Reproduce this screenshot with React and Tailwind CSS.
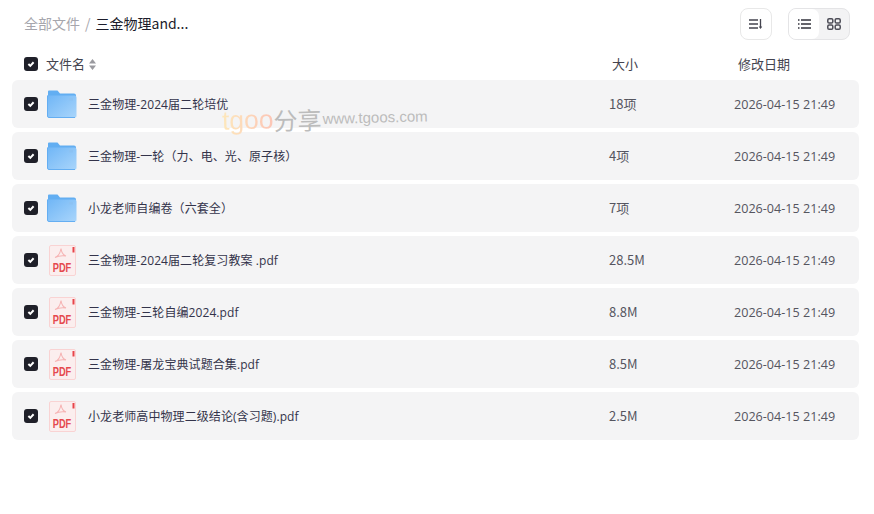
import React from "react";

const files = [
  { name: "三金物理-2024届二轮培优", size: "18项", type: "folder" },
  { name: "三金物理-一轮（力、电、光、原子核）", size: "4项", type: "folder" },
  { name: "小龙老师自编卷（六套全）", size: "7项", type: "folder" },
  { name: "三金物理-2024届二轮复习教案 .pdf", size: "28.5M", type: "pdf" },
  { name: "三金物理-三轮自编2024.pdf", size: "8.8M", type: "pdf" },
  { name: "三金物理-屠龙宝典试题合集.pdf", size: "8.5M", type: "pdf" },
  { name: "小龙老师高中物理二级结论(含习题).pdf", size: "2.5M", type: "pdf" },
];

const Check = () => (
  <span className="flex h-[14px] w-[14px] shrink-0 items-center justify-center rounded-[3px] bg-[#1f2029]">
    <svg width="10" height="10" viewBox="0 0 10 10" fill="none">
      <path d="M2.400 5 4.300 6.900 7.600 3.300" stroke="#fff" strokeWidth="2" />
    </svg>
  </span>
);

const FolderIcon = () => (
  <svg width="30" height="28" viewBox="0 0 30 28" className="shrink-0">
    <defs>
      <linearGradient id="folderFill" x1="0" y1="0" x2="1" y2="1">
        <stop offset="0" stopColor="#70b6f6" />
        <stop offset="1" stopColor="#a9d5fb" />
      </linearGradient>
    </defs>
    <path d="M1 1.500a1 1 0 0 1 1-1h8.500l2.500 3h14a2 2 0 0 1 2 2V7H1z" fill="#62aef2" />
    <path d="M.5 5.500h27a2 2 0 0 1 2 2V26a1.500 1.500 0 0 1-1.500 1.500H2A1.500 1.500 0 0 1 .5 26z" fill="url(#folderFill)" />
    <path d="M.5 5.500V26A1.500 1.500 0 0 0 2 27.500h26" fill="none" stroke="#64aef2" />
    <rect x="22" y="8" width="4" height="2.500" fill="#8cc2f3" />
  </svg>
);

const PdfIcon = () => (
  <svg width="27" height="31" viewBox="0 0 27 31" className="shrink-0">
    <rect x=".5" y=".5" width="26" height="30" rx="1.500" fill="#fbeeee" stroke="#f9d3d3" />
    <rect x="23.500" y="2" width="2" height="5.500" fill="#e8444a" />
    <path d="M6 12.500c3-1 5-3 6-9 .5 4 2 6.500 5 7.500-4-.5-8 0-11 1.500z" fill="none" stroke="#f6b4b4" strokeWidth="1.100" />
    <text x="13" y="27" textAnchor="middle" textLength="18.500" lengthAdjust="spacingAndGlyphs" fontFamily="'Liberation Sans', sans-serif" fontWeight="700" fontSize="12" fill="#e5484d">PDF</text>
  </svg>
);

const App = () => {
  return (
    <div className="relative h-[514px] w-[874px] overflow-hidden bg-white font-['Noto_Sans_CJK_SC','Noto_Sans',sans-serif] text-[13px] text-[#33334a]">
      <div className="flex h-[48px] items-center justify-between pl-[24px] pr-[24px]">
        <div className="-mt-[2px] flex items-center text-[14px]">
          <span className="text-[#a6a6ad]">全部文件</span>
          <span className="mx-[5px] text-[#a6a6ad]">/</span>
          <span className="text-[#1c1c2b]">三金物理and...</span>
        </div>
        <div className="flex items-center gap-[16px]">
          <button className="flex h-[32px] w-[32px] items-center justify-center rounded-[8px] border border-[#e8e8e8]">
            <svg width="14" height="12" viewBox="0 0 14 12" fill="none" stroke="#44444f" strokeWidth="1.300">
              <path d="M0 2h9M0 6h9M0 10h9M11.500 1v9" />
              <path d="M9.800 8.500h3.400L11.500 11z" fill="#44444f" stroke="none" />
            </svg>
          </button>
          <div className="flex h-[32px] w-[62px] rounded-[8px] border border-[#e4e4e6] bg-[#f3f3f4]">
            <button className="flex w-[30px] items-center justify-center rounded-[7px] bg-white">
              <svg width="13" height="10" viewBox="0 0 13 10" fill="none" stroke="#33333d" strokeWidth="1.300">
                <path d="M3 1h10M3 5h10M3 9h10M0 1h1.500M0 5h1.500M0 9h1.500" />
              </svg>
            </button>
            <button className="flex flex-1 items-center justify-center">
              <svg width="14" height="12" viewBox="0 0 14 12" fill="none" stroke="#4c4c56" strokeWidth="1.500">
                <rect x=".8" y=".8" width="5" height="4.200" rx="1.300" />
                <rect x="8.200" y=".8" width="5" height="4.200" rx="1.300" />
                <rect x=".8" y="7" width="5" height="4.200" rx="1.300" />
                <rect x="8.200" y="7" width="5" height="4.200" rx="1.300" />
              </svg>
            </button>
          </div>
        </div>
      </div>

      <div className="flex h-[32px] items-center pl-[24px] text-[#44444f]">
        <Check />
        <span className="ml-[8px] flex w-[566px] items-center gap-[4px]">
          文件名
          <svg width="7" height="11" viewBox="0 0 7 11" fill="#9a9a9f">
            <path d="M3.500 0 7 4.500H0zM3.500 11 0 6.500h7z" />
          </svg>
        </span>
        <span className="w-[126px]">大小</span>
        <span>修改日期</span>
      </div>

      <div className="flex flex-col gap-[4px] pl-[12px] pr-[15px]">
        {files.map((file) => (
          <div key={file.name} className="flex h-[48px] items-center rounded-[6px] bg-[#f4f4f5] pl-[12px]">
            <Check />
            <span className="ml-[9px] flex w-[30px] justify-center">
              {file.type === "folder" ? <FolderIcon /> : <PdfIcon />}
            </span>
            <span className="ml-[11px] w-[521px] truncate pt-[2px] font-['Open_Sans','Noto_Sans_CJK_SC',sans-serif] text-[12px] tracking-[0.08px]">{file.name}</span>
            <span className="w-[125px] text-[#55555f]">{file.size}</span>
            <span className="pt-[2px] font-['Open_Sans',sans-serif] text-[12.600px] text-[#55555f]">2026-04-15 21:49</span>
          </div>
        ))}
      </div>

      <div className="absolute left-[222px] top-[99px] flex -rotate-[1.5deg] items-center whitespace-nowrap font-['Liberation_Sans',sans-serif] text-[#bcbcbc]">
        <span className="bg-gradient-to-r from-[#fde8bc] to-[#fcc5b6] bg-clip-text text-[26.500px] text-transparent">tgoo</span>
        <span className="font-['Noto_Sans_CJK_SC',sans-serif] text-[24px]">分享</span>
        <span className="ml-[1px] text-[15px]">www.tgoos.com</span>
      </div>
    </div>
  );
};

export default App;
